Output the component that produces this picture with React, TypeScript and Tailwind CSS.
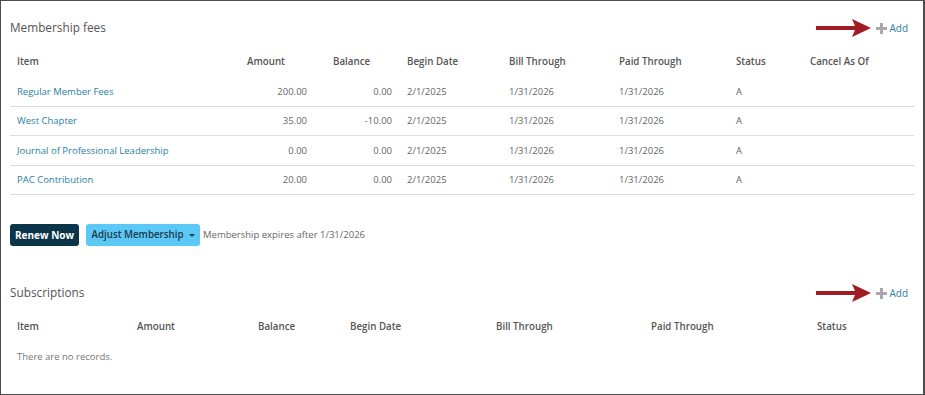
import React from 'react';

interface FeeRow {
  item: string;
  amount: string;
  balance: string;
  begin: string;
  bill: string;
  paid: string;
  status: string;
}

const fees: FeeRow[] = [
  { item: 'Regular Member Fees', amount: '200.00', balance: '0.00', begin: '2/1/2025', bill: '1/31/2026', paid: '1/31/2026', status: 'A' },
  { item: 'West Chapter', amount: '35.00', balance: '-10.00', begin: '2/1/2025', bill: '1/31/2026', paid: '1/31/2026', status: 'A' },
  { item: 'Journal of Professional Leadership', amount: '0.00', balance: '0.00', begin: '2/1/2025', bill: '1/31/2026', paid: '1/31/2026', status: 'A' },
  { item: 'PAC Contribution', amount: '20.00', balance: '0.00', begin: '2/1/2025', bill: '1/31/2026', paid: '1/31/2026', status: 'A' },
];

function Arrow() {
  return (
    <svg width="55" height="18" viewBox="0 0 55 18" className="block">
      <path d="M0 7 H39 L36 0 L55 9 L36 18 L39 11 H0 Z" fill="#a11b22" />
    </svg>
  );
}

function AddLink() {
  return (
    <div className="flex items-center">
      <Arrow />
      <svg width="11" height="11" viewBox="0 0 11 11" className="ml-[5px] block">
        <path d="M4 0 H7 V4 H11 V7 H7 V11 H4 V7 H0 V4 H4 Z" fill="#a9a9a9" />
      </svg>
      <span className="ml-[2px] text-[10px] text-[#2b7ea6]">Add</span>
    </div>
  );
}

function SectionHeading({ title }: { title: string }) {
  return (
    <div className="flex items-center justify-between h-[20px] pr-[6px]">
      <h2 className="text-[11.8px] text-[#555]">{title}</h2>
      <AddLink />
    </div>
  );
}

const feeCols = 'grid grid-cols-[230px_86px_74px_102px_110px_117px_74px_111px]';
const subCols = 'grid grid-cols-[120px_121px_92px_146px_155px_166px_104px]';

export default function App() {
  return (
    <div
      className="w-[925px] h-[395px] border border-r-2 border-[#4d4d4d] bg-white text-[9.5px] text-[#666] px-[9px]"
      style={{ fontFamily: '"Open Sans", "Liberation Sans", sans-serif' }}
    >
      <div className="pt-[17px]">
        <SectionHeading title="Membership fees" />
      </div>

      <div className="mt-[10px]">
        <div className={`${feeCols} h-[29px] items-center font-semibold text-[9.75px] text-[#555]`}>
          <div className="pl-[7px]">Item</div>
          <div className="pl-[7px]">Amount</div>
          <div className="pl-[7px]">Balance</div>
          <div className="pl-[7px]">Begin Date</div>
          <div className="pl-[7px]">Bill Through</div>
          <div className="pl-[7px]">Paid Through</div>
          <div className="pl-[7px]">Status</div>
          <div className="pl-[7px]">Cancel As Of</div>
        </div>
        {fees.map((row) => (
          <div key={row.item} className={`${feeCols} h-[29.5px] items-center border-b border-[#dcdcdc] pt-[1px]`}>
            <div className="pl-[7px] text-[#2b7ea6]">{row.item}</div>
            <div className="pr-[19px] text-right">{row.amount}</div>
            <div className="pr-[8px] text-right">{row.balance}</div>
            <div className="pl-[7px]">{row.begin}</div>
            <div className="pl-[7px]">{row.bill}</div>
            <div className="pl-[7px]">{row.paid}</div>
            <div className="pl-[7px]">{row.status}</div>
            <div />
          </div>
        ))}
      </div>

      <div className="mt-[29px] flex items-center h-[22px]">
        <button className="h-[22px] w-[69px] rounded-[3px] bg-[#0d3549] text-white font-bold text-[10px]">
          Renew Now
        </button>
        <button className="ml-[7px] h-[22px] w-[114px] justify-center rounded-[3px] bg-[#5bc8f6] text-[#1f3a4a] font-semibold text-[9.75px] flex items-center">
          Adjust Membership
          <span className="ml-[5px] inline-block w-0 h-0 border-l-[3px] border-r-[3px] border-t-[3px] border-l-transparent border-r-transparent border-t-[#1f3a4a]" />
        </button>
        <span className="ml-[3px]">Membership expires after 1/31/2026</span>
      </div>

      <div className="mt-[37px]">
        <SectionHeading title="Subscriptions" />
      </div>

      <div className={`${subCols} mt-[12px] h-[25px] items-center font-semibold text-[9.75px] text-[#555]`}>
        <div className="pl-[7px]">Item</div>
        <div className="pl-[7px]">Amount</div>
        <div className="pl-[7px]">Balance</div>
        <div className="pl-[7px]">Begin Date</div>
        <div className="pl-[7px]">Bill Through</div>
        <div className="pl-[7px]">Paid Through</div>
        <div className="pl-[7px]">Status</div>
      </div>
      <div className="pl-[7px] h-[34px] pt-[1px] flex items-center text-[#777]">There are no records.</div>
    </div>
  );
}
